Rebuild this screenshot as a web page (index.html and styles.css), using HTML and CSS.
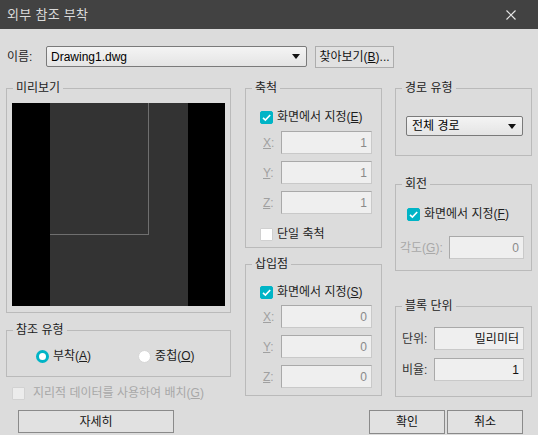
FILE: index.html
```html
<!DOCTYPE html>
<html lang="ko">
<head>
<meta charset="utf-8">
<title>외부 참조 부착</title>
<link rel="stylesheet" href="styles.css">
</head>
<body>
<div class="dialog">
  <div class="titlebar">
    <span class="title">외부 참조 부착</span>
    <svg class="close" width="10" height="10" viewBox="0 0 10 10"><path d="M0.5 0.5L9.5 9.5M9.5 0.5L0.5 9.5" stroke="#e6e6e6" stroke-width="1.2" fill="none"/></svg>
  </div>
  <div class="content">
    <div class="name-row">
      <span class="name-label">이름:</span>
      <div class="select name-select"><span>Drawing1.dwg</span><span class="arrow"></span></div>
      <div class="btn browse">찾아보기(<u>B</u>)...</div>
    </div>
    <div class="columns">
      <div class="col col1">
        <div class="group preview-group">
          <div class="legend">미리보기</div>
          <div class="gbody">
            <div class="canvas">
              <div class="sheet"><div class="frame"></div></div>
            </div>
          </div>
        </div>
        <div class="group reftype-group">
          <div class="legend">참조 유형</div>
          <div class="gbody radios">
            <label class="radio-item r1"><span class="radio on"></span>부착(<u>A</u>)</label>
            <label class="radio-item r2"><span class="radio"></span>중첩(<u>O</u>)</label>
          </div>
        </div>
        <div class="geo-row">
          <span class="check disabled"></span><span class="geo-text">지리적 데이터를 사용하여 배치(<u>G</u>)</span>
        </div>
      </div>
      <div class="col col2">
        <div class="group scale-group">
          <div class="legend">축척</div>
          <div class="gbody">
            <div class="check-row"><span class="check on"><svg width="13" height="13" viewBox="0 0 13 13"><path d="M3 6.8L5.4 9.1L10.2 4" stroke="#fff" stroke-width="1.6" fill="none"/></svg></span>화면에서 지정(<u>E</u>)</div>
            <div class="field-row first"><span class="flabel"><u>X</u>:</span><span class="input">1</span></div>
            <div class="field-row"><span class="flabel"><u>Y</u>:</span><span class="input">1</span></div>
            <div class="field-row"><span class="flabel"><u>Z</u>:</span><span class="input">1</span></div>
            <div class="check-row uniform"><span class="check"></span>단일 축척</div>
          </div>
        </div>
        <div class="group insert-group">
          <div class="legend">삽입점</div>
          <div class="gbody">
            <div class="check-row"><span class="check on"><svg width="13" height="13" viewBox="0 0 13 13"><path d="M3 6.8L5.4 9.1L10.2 4" stroke="#fff" stroke-width="1.6" fill="none"/></svg></span>화면에서 지정(<u>S</u>)</div>
            <div class="field-row first"><span class="flabel"><u>X</u>:</span><span class="input">0</span></div>
            <div class="field-row"><span class="flabel"><u>Y</u>:</span><span class="input">0</span></div>
            <div class="field-row"><span class="flabel"><u>Z</u>:</span><span class="input">0</span></div>
          </div>
        </div>
      </div>
      <div class="col col3">
        <div class="group path-group">
          <div class="legend">경로 유형</div>
          <div class="gbody">
            <div class="select path-select"><span>전체 경로</span><span class="arrow"></span></div>
          </div>
        </div>
        <div class="group rot-group">
          <div class="legend">회전</div>
          <div class="gbody">
            <div class="check-row"><span class="check on"><svg width="13" height="13" viewBox="0 0 13 13"><path d="M3 6.8L5.4 9.1L10.2 4" stroke="#fff" stroke-width="1.6" fill="none"/></svg></span>화면에서 지정(<u>F</u>)</div>
            <div class="angle-row"><span class="flabel">각도(<u>G</u>):</span><span class="input angle">0</span></div>
          </div>
        </div>
        <div class="group unit-group">
          <div class="legend">블록 단위</div>
          <div class="gbody">
            <div class="unit-row"><span class="ulabel">단위:</span><span class="input dark">밀리미터</span></div>
            <div class="unit-row second"><span class="ulabel">비율:</span><span class="input dark">1</span></div>
          </div>
        </div>
      </div>
    </div>
    <div class="footer">
      <div class="btn details">자세히</div>
      <div class="ok-cancel">
        <div class="btn small">확인</div>
        <div class="btn small">취소</div>
      </div>
    </div>
  </div>
</div>
</body>
</html>
```

FILE: styles.css
```css
* { box-sizing: border-box; }
html, body { margin: 0; padding: 0; }
body {
  width: 538px;
  height: 435px;
  overflow: hidden;
  background: #dcdcdc;
  font-family: "Liberation Sans", "Noto Sans CJK KR", sans-serif;
  font-size: 12px;
  line-height: 16px;
  color: #1e1e1e;
}
u { text-decoration: underline; text-underline-offset: 1px; }

.titlebar {
  height: 29px;
  background: #424242;
  display: flex;
  align-items: center;
  justify-content: space-between;
  padding: 0 22px 0 7px;
}
.title { color: #dadada; font-size: 13px; letter-spacing: 0.3px; }
.close { display: block; }

.content { padding: 17px 6px 0 6px; }

.name-row { display: flex; align-items: center; height: 21px; }
.name-label { width: 40px; padding-left: 1px; }
.select {
  display: flex;
  align-items: center;
  justify-content: space-between;
  border: 1px solid #7a7a7a;
  border-radius: 2px;
  background: linear-gradient(#f4f4f4, #e4e4e4);
  padding: 0 6px 0 4px;
  color: #000;
}
.name-select { width: 261px; height: 21px; }
.arrow {
  width: 0; height: 0;
  border-left: 4px solid transparent;
  border-right: 4px solid transparent;
  border-top: 5px solid #111;
}
.btn {
  display: flex;
  align-items: center;
  justify-content: center;
  background: #e1e1e1;
  border: 1px solid #9a9a9a;
  color: #111;
}
.browse { margin-left: 8px; width: 79px; height: 22px; border-color: #adadad; }

.columns { display: flex; margin-top: 13px; height: 330px; }
.col { display: flex; flex-direction: column; flex: none; }
.col1 { width: 225px; }
.col2 { width: 137px; margin-left: 14px; }
.col3 { width: 137px; margin-left: 13px; }

.group { border: 1px solid #bababa; flex: none; }
.legend {
  width: fit-content;
  margin: -9px 0 0 6px;
  padding: 0 3px;
  background: #dcdcdc;
  line-height: 16px;
  color: #222;
}

.preview-group { margin-top: 8px; height: 225px; }
.preview-group .gbody { padding: 7px 5px 0 5px; }
.canvas { height: 203px; background: #000; display: flex; justify-content: center; }
.sheet { width: 138px; height: 100%; background: #333333; }
.frame { width: 99px; height: 132px; border-right: 1px solid #6f6f6f; border-bottom: 1px solid #6f6f6f; }

.reftype-group { margin-top: 17px; height: 47px; }
.radios { display: flex; padding-top: 10px; }
.radio-item { display: flex; align-items: center; }
.r1 { margin-left: 29px; }
.r2 { margin-left: 47px; }
.radio {
  width: 13px; height: 13px; border-radius: 50%;
  background: #fff; border: 1px solid #d6d6d6;
  margin-right: 4px;
}
.radio.on { border: 3px solid #00b4c6; }

.geo-row { display: flex; align-items: center; margin-top: 8px; padding-left: 6px; color: #a8a8a8; }
.geo-text { margin-left: 4px; }

.check {
  display: inline-flex;
  width: 13px; height: 13px;
  background: #fff;
  border: 1px solid #d0d0d0;
  border-radius: 1px;
  margin-right: 4px;
  flex: none;
}
.check.on { background: #00b4c6; border-color: #00b4c6; border-radius: 2px; }
.check.on svg { margin: -1px; }
.check.disabled { background: #ececec; border-color: #d2d2d2; }

.check-row { display: flex; align-items: center; height: 16px; }

.scale-group { margin-top: 8px; height: 160px; }
.scale-group .gbody { padding: 13px 9px 0 14px; }
.insert-group { margin-top: 16px; height: 132px; }
.insert-group .gbody { padding: 12px 9px 0 14px; }
.field-row { display: flex; align-items: center; margin-top: 7px; }
.field-row.first { margin-top: 6px; }
.insert-group .field-row.first { margin-top: 5px; }
.field-row .flabel { width: 21px; padding-left: 3px; color: #a0a0a0; }
.input {
  display: flex;
  align-items: center;
  justify-content: flex-end;
  height: 23px;
  width: 91px;
  background: #efefef;
  border: 1px solid #c9c9c9;
  border-top-color: #a9a9a9;
  border-left-color: #a9a9a9;
  padding-right: 4px;
  color: #8a8a8a;
}
.uniform { margin-top: 12px; }

.path-group { margin-top: 8px; height: 68px; }
.path-group .gbody { padding: 20px 0 0 10px; }
.path-select { width: 117px; height: 20px; padding-left: 5px; }

.rot-group { margin-top: 28px; height: 87px; }
.rot-group .gbody { padding: 14px 7px 0 4px; }
.rot-group .check-row { padding-left: 7px; }
.angle-row { display: flex; align-items: center; justify-content: space-between; margin-top: 14px; }
.angle-row .flabel { color: #a8a8a8; }
.input.angle { width: 75px; height: 23px; }

.unit-group { margin-top: 35px; height: 91px; }
.unit-group .gbody { padding: 13px 7px 0 6px; }
.unit-row { display: flex; align-items: center; justify-content: space-between; }
.unit-row.second { margin-top: 8px; }
.ulabel { color: #333; }
.input.dark { width: 90px; color: #111; }

.footer { display: flex; justify-content: space-between; align-items: flex-start; }
.details { margin-left: 12px; width: 156px; height: 23px; border-color: #8a8a8a; }
.ok-cancel { display: flex; gap: 2px; margin-right: 9px; }
.btn.small { width: 76px; height: 24px; border-color: #8a8a8a; }
```
